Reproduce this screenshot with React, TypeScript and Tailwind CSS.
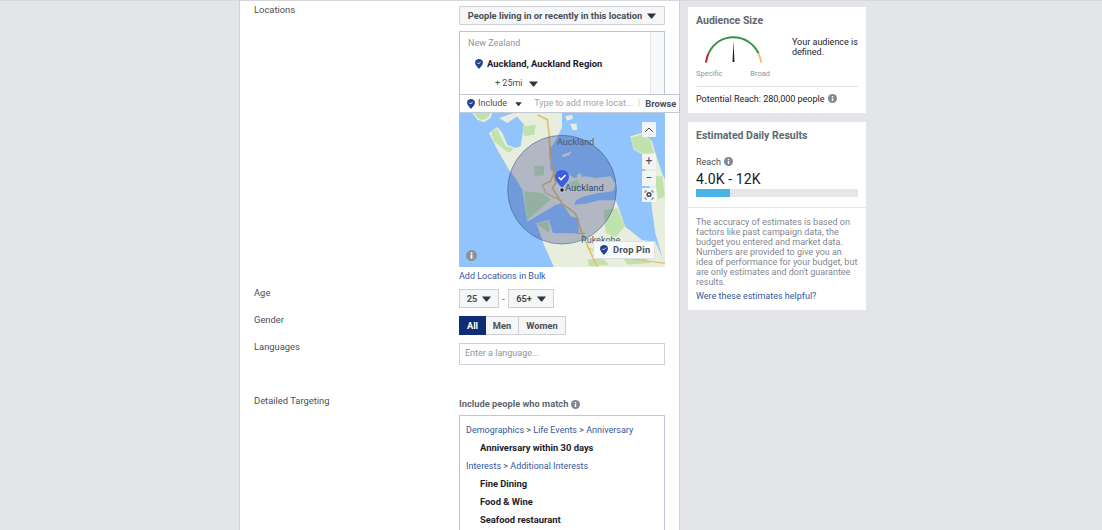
const font = "font-['Roboto','Liberation_Sans',sans-serif]"

function Caret({ className = "" }: { className?: string }) {
  return (
    <svg width="9" height="6" viewBox="0 0 9 6" className={`shrink-0 ${className}`}>
      <path d="M0 0.5h9L5.2 5.2a1 1 0 0 1-1.4 0z" fill="#31353b" />
    </svg>
  )
}

function Info({ className = "" }: { className?: string }) {
  return (
    <svg width="9" height="9" viewBox="0 0 10 10" className={`shrink-0 ${className}`}>
      <circle cx="5" cy="5" r="5" fill="#7f8893" />
      <rect x="4.2" y="4.2" width="1.6" height="3.6" fill="#fff" />
      <rect x="4.2" y="2.2" width="1.6" height="1.4" fill="#fff" />
    </svg>
  )
}

function Pin({ className = "" }: { className?: string }) {
  return (
    <svg width="8" height="10" viewBox="0 0 8 10" className={`shrink-0 ${className}`}>
      <path d="M4 0C1.8 0 0 1.3 0 3.6 0 6 2.5 8.4 4 10c1.5-1.6 4-4 4-6.4C8 1.3 6.2 0 4 0z" fill="#23418f" />
      <path d="M2.3 3.8l1.2 1.2 2.2-2.2" stroke="#fff" strokeWidth="0.9" fill="none" />
    </svg>
  )
}

// coastline traced at 3x, so the viewBox is three times the map's size
function MapArt() {
  return (
    <svg viewBox="0 0 618 462" className="absolute inset-0 w-full h-full">
      <rect width="618" height="462" fill="#91c4fc" />
      <path
        d="M165 0H309L309 45 285 90 270 110 275 170 292 182 315 175 345 195 380 190 410 195 455 190 470 215 462 235 420 240 375 250 352 262 345 275 380 272 420 262 470 262 474 271 499 341 549 381 589 386 618 451V462H285L255 396 232 330 270 321 282 361 309 361 359 361 360 316 335 310 309 270 290 276 205 326 190 231 172 200 150 170 115 110 90 60 115 42 130 60 145 95 170 105 185 100 195 35Z"
        fill="#e8eedd"
      />
      <path d="M40 0h60l-5 15-20 13-20-8zM120 15l45-15 10 10-30 20zM319 10l20-5 3 12-18 6zM334 32l18 0 3 18-14 2z" fill="#e8eedd" />
      <path d="M514 70L549 60 579 85 589 120 609 180 618 200V451L614 446 589 361 579 290 574 231 559 170 554 125 524 110z" fill="#e8eedd" />
      <path d="M309 125l30-10-8 12-20 6zM354 185l12-5 4 24-14 2z" fill="#e8eedd" />
      <path d="M45 0h50l-6 12-18 10-14-6zM95 55l20-7 10 22 15 30 25 5-15 15-20-15-25-20zM190 40l40-5-5 30-30 5zM225 160l30-3 0 30-28 3zM195 235l55 5 25 20-35 30-35 30-5-40zM228 330l42-5 2 35-22-15zM434 291l41-6 23 55-28 32-30-12zM515 75l35-12 25 22 10 35-30 3-30-14zM330 210l25-10 12 20-20 10zM385 440l45-5 20 20-60 5zM490 430l55-5 30 25-70 5zM585 190l25 0 8 60-20 10z" fill="#c0e3ae" />
      <path d="M235 5l30 15 5 40 5 80 10 40-10 25-25 10M285 180l5 30-10 15 29 46 40 30 20 60 20 45 11 24 15 32" stroke="#e3c06a" strokeWidth="5" fill="none" />
      <path d="M250 215l10 25 49 25M349 361h30M389 406l50 20 179 25" stroke="#e3c06a" strokeWidth="3.5" fill="none" />
      <circle cx="309" cy="230" r="163" fill="#1d2a7c" fillOpacity="0.27" stroke="#33507f" strokeWidth="1.5" />
    </svg>
  )
}

function Gauge() {
  return (
    <svg width="66" height="36" viewBox="0 0 66 36" className="block">
      <path d="M3 30.5C3.3 27.5 4.2 24.5 5.4 21.6" stroke="#b8242a" strokeWidth="2" fill="none" />
      <path d="M5.4 21.6C10.3 11.5 19.5 5.3 30.5 5.3c11 0 20.5 6.6 25 16" stroke="#37923f" strokeWidth="2" fill="none" />
      <path d="M55.5 21.3c1.4 3 2.3 6 2.6 9.2" stroke="#f0bd7d" strokeWidth="2" fill="none" />
      <path d="M30.5 9l1 21h-2z" fill="#1d2129" />
    </svg>
  )
}

export default function App() {
  return (
    <div className={`${font} w-[1102px] h-[530px] overflow-hidden bg-[#e3e5e8] flex border-t border-[#d6d8dc] text-[#1d2129] text-[9px]`}>
      {/* main form column */}
      <div className="ml-[239px] w-[441px] h-full bg-white border-x border-[#cfd1d6] flex pt-[3px]">
        <div className="w-[219px] pl-[14px] text-[#4b4f56] text-[9.4px]">
          <div className="h-[283px] leading-[12px]">Locations</div>
          <div className="h-[27px] leading-[12px]">Age</div>
          <div className="h-[27px] leading-[12px]">Gender</div>
          <div className="h-[54px] leading-[12px]">Languages</div>
          <div className="leading-[12px]">Detailed Targeting</div>
        </div>
        <div className="w-[206px]">
          <div className="h-[19px] mt-[2px] bg-[#f5f6f7] border border-[#ced0d4] flex items-center justify-center gap-[5px] font-bold text-[9.3px] text-[#4b4f56] rounded-[1px] whitespace-nowrap">
            People living in or recently in this location
            <Caret />
          </div>

          <div className="relative mt-[6px] w-[206px]">
            <div className="h-[63px] border border-b-0 border-[#bec3d0] flex">
              <div className="flex-1 pl-[8px] pt-[6px]">
                <div className="text-[#90949c] leading-[11px]">New Zealand</div>
                <div className="mt-[9px] ml-[7px] flex items-center gap-[4px] font-bold text-[9.4px] leading-[11px] whitespace-nowrap">
                  <Pin />
                  Auckland, Auckland Region
                </div>
                <div className="mt-[9px] ml-[27px] flex items-center gap-[6px] text-[#4b4f56] leading-[11px]">
                  + 25mi <Caret />
                </div>
              </div>
              <div className="w-[14px] border-l border-[#e4e6ea] bg-[#f7f8f9]" />
            </div>
            <div className="absolute left-0 top-[63px] w-[221px] h-[19px] bg-white border border-[#c3c8d6] flex items-center pl-[7px] z-10 whitespace-nowrap">
              <Pin />
              <span className="ml-[3px] text-[#4b4f56]">Include</span>
              <Caret className="ml-[7px] scale-75" />
              <span className="ml-[11px] text-[#a1a5ac]">Type to add more locat...</span>
              <span className="ml-[5px] text-[#ccd0d5]">|</span>
              <span className="ml-[5px] font-bold text-[9.3px] text-[#4b4f56]">Browse</span>
            </div>
            <div className="relative h-[154px] mt-[19px] overflow-hidden">
              <MapArt />
              <span className="absolute left-[98px] top-[23px] text-[9px] text-[#4d5a64]">Auckland</span>
              <span className="absolute left-[106px] top-[68px] text-[9.4px] text-[#2f4a6c]">Auckland</span>
              <span className="absolute left-[122px] top-[121px] text-[9px] text-[#4d5a64]">Pukekohe</span>
              <svg width="16" height="23" viewBox="0 0 16 23" className="absolute left-[96px] top-[57px]">
                <path d="M7 0C3 0 0 3 0 7c0 4 4 7 7 11 3-4 7-7 7-11 0-4-3-7-7-7z" fill="#3b5fe0" />
                <path d="M3.6 7.2l2.5 2.5 4.4-4.6" stroke="#fff" strokeWidth="1.5" fill="none" />
                <circle cx="7" cy="20" r="2.2" fill="#1d2129" stroke="#fff" strokeWidth="0.7" />
              </svg>
              <div className="absolute right-[9px] top-[9px] w-[14px] h-[15px] bg-[#f3f4f5] rounded-[1px] flex items-center justify-center">
                <svg width="10" height="6" viewBox="0 0 10 6"><path d="M1 5l4-4 4 4" stroke="#4b4f56" strokeWidth="1" fill="none" /></svg>
              </div>
              <div className="absolute right-[9px] top-[41px] w-[14px] flex flex-col gap-[2px]">
                <div className="h-[15px] bg-[#f3f4f5] text-[#4b4f56] text-[12px] leading-[15px] text-center">+</div>
                <div className="h-[15px] bg-[#f3f4f5] text-[#4b4f56] text-[12px] leading-[14px] text-center">−</div>
                <div className="h-[14px] bg-[#f3f4f5] flex items-center justify-center">
                  <svg width="10" height="10" viewBox="0 0 10 10">
                    <circle cx="5" cy="4.5" r="2.6" fill="#4b4f56" />
                    <circle cx="5" cy="4.5" r="1" fill="#fff" />
                    <path d="M1 3V1h2M7 1h2v2M1 7v2h2M7 9h2V7" stroke="#4b4f56" strokeWidth="0.7" fill="none" />
                  </svg>
                </div>
              </div>
              <svg width="11" height="11" viewBox="0 0 10 10" className="absolute left-[7px] top-[137px]">
                <circle cx="5" cy="5" r="5" fill="#8d9296" />
                <rect x="4.2" y="4.2" width="1.6" height="3.6" fill="#fff" />
                <rect x="4.2" y="2.2" width="1.6" height="1.4" fill="#fff" />
              </svg>
              <div className="absolute left-[134px] top-[128px] w-[62px] h-[18px] bg-[#f8f9fa] border border-[#dddfe2] rounded-[1px] flex items-center pl-[6px] gap-[5px] font-bold text-[9.3px] tracking-[0.2px] text-[#4b4f56] whitespace-nowrap">
                <Pin />
                Drop Pin
              </div>
            </div>
          </div>

          <div className="mt-[3px] text-[#365899] leading-[12px]">Add Locations in Bulk</div>

          <div className="mt-[7px] flex items-center h-[19px] font-bold text-[9.3px] text-[#4b4f56]">
            <div className="w-[40px] h-[19px] bg-[#f5f6f7] border border-[#ced0d4] flex items-center justify-center gap-[5px]">25 <Caret /></div>
            <span className="w-[9px] text-center font-normal">-</span>
            <div className="w-[46px] h-[19px] bg-[#f5f6f7] border border-[#ced0d4] flex items-center justify-center gap-[5px]">65+ <Caret /></div>
          </div>

          <div className="mt-[8px] flex h-[19px] font-bold text-[9.3px] text-[#4b4f56]">
            <div className="w-[27px] bg-[#0f2d73] text-white flex items-center justify-center">All</div>
            <div className="w-[33px] bg-[#f5f6f7] border-y border-r border-[#ced0d4] flex items-center justify-center">Men</div>
            <div className="w-[47px] bg-[#f5f6f7] border-y border-r border-[#ced0d4] flex items-center justify-center">Women</div>
          </div>

          <div className="mt-[8px] h-[22px] border border-[#ced0d4] pl-[5px] flex items-center text-[#90949c]">Enter a language...</div>

          <div className="mt-[33px] flex items-center gap-[3px] font-bold text-[9.3px] text-[#606770] leading-[12px]">
            Include people who match <Info />
          </div>

          <div className="mt-[5px] h-[200px] border border-[#bec3dc] pl-[6px] pt-[8px]">
            <div className="h-[18px] leading-[12px] text-[#365899]">Demographics <span className="text-[#4b4f56]">&gt;</span> Life Events <span className="text-[#4b4f56]">&gt;</span> Anniversary</div>
            <div className="h-[18px] leading-[12px] pl-[14px] font-bold text-[9.4px]">Anniversary within 30 days</div>
            <div className="h-[18px] leading-[12px] text-[#365899]">Interests <span className="text-[#4b4f56]">&gt;</span> Additional Interests</div>
            <div className="h-[18px] leading-[12px] pl-[14px] font-bold text-[9.4px]">Fine Dining</div>
            <div className="h-[18px] leading-[12px] pl-[14px] font-bold text-[9.4px]">Food &amp; Wine</div>
            <div className="h-[18px] leading-[12px] pl-[14px] font-bold text-[9.4px]">Seafood restaurant</div>
          </div>
        </div>
      </div>

      {/* right column */}
      <div className="ml-[8px] w-[178px] pt-[6px] flex flex-col gap-[9px]">
        <div className="h-[106px] bg-white px-[8px] pt-[8px]">
          <div className="font-bold text-[#606770] text-[10.5px] leading-[12px]">Audience Size</div>
          <div className="flex mt-[5px]">
            <div className="w-[96px] shrink-0">
              <div className="ml-[7px]"><Gauge /></div>
              <div className="flex justify-between pr-[1px] mt-[1px] text-[7.5px] text-[#90949c] leading-[9px] w-[75px]">
                <span>Specific</span>
                <span>Broad</span>
              </div>
            </div>
            <div className="mt-[5px] leading-[10px] whitespace-nowrap">Your audience is<br />defined.</div>
          </div>
          <div className="mt-[8px] border-t border-[#dddfe2] pt-[7px] flex items-center gap-[3px] leading-[11px] whitespace-nowrap">
            Potential Reach: 280,000 people <Info className="-mt-[2px]" />
          </div>
        </div>

        <div className="h-[188px] bg-white">
          <div className="h-[86px] px-[8px] pt-[8px] border-b border-[#e4e6ea]">
            <div className="font-bold text-[#606770] text-[10.5px] leading-[12px]">Estimated Daily Results</div>
            <div className="mt-[15px] flex items-center gap-[3px] text-[#4b4f56] leading-[11px]">Reach <Info className="-mt-[2px]" /></div>
            <div className="mt-[3px] text-[14px] leading-[17px] tracking-[0.1px]">4.0K - 12K</div>
            <div className="mt-[1px] h-[8px] bg-[#e4e6ea]">
              <div className="w-[34px] h-full bg-[#4bb4e6]" />
            </div>
          </div>
          <div className="px-[8px] pt-[9px] text-[#7f8792] leading-[10px]">
            The accuracy of estimates is based on factors like past campaign data, the budget you entered and market data. Numbers are provided to give you an idea of performance for your budget, but are only estimates and don't guarantee results.
          </div>
          <div className="px-[8px] mt-[4px] text-[#365899] leading-[11px]">Were these estimates helpful?</div>
        </div>
      </div>
    </div>
  )
}
